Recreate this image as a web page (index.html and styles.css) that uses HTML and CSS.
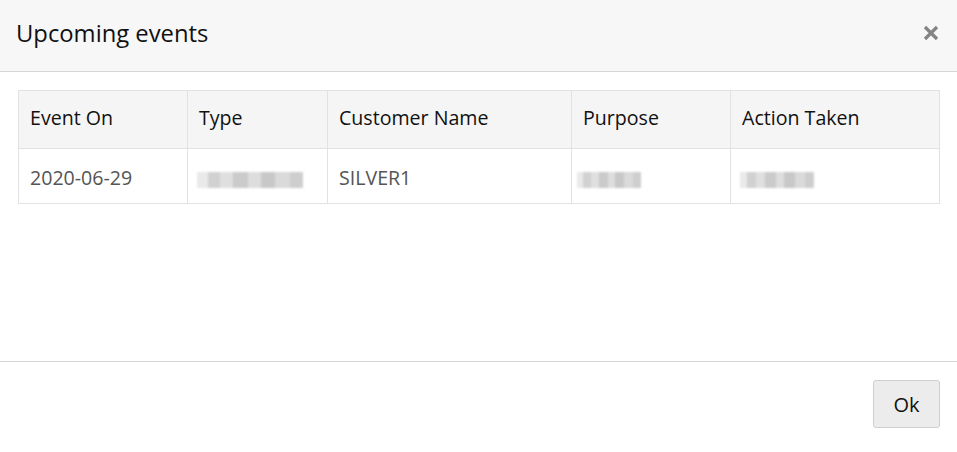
FILE: index.html
```html
<!DOCTYPE html>
<html>
<head>
<meta charset="utf-8">
<link rel="stylesheet" href="styles.css">
</head>
<body>
<div class="modal">
  <div class="modal-header">
    <h4 class="title">Upcoming events</h4>
    <button class="close" aria-label="Close">
      <svg width="16" height="16" viewBox="0 0 16 16"><path d="M2 2 L14 14 M14 2 L2 14" stroke="#848484" stroke-width="3.2" stroke-linecap="butt"/></svg>
    </button>
  </div>
  <div class="modal-body">
    <table class="events">
      <thead>
        <tr>
          <th class="c1">Event On</th>
          <th class="c2">Type</th>
          <th class="c3">Customer Name</th>
          <th class="c4">Purpose</th>
          <th class="c5">Action Taken</th>
        </tr>
      </thead>
      <tbody>
        <tr>
          <td>2020-06-29</td>
          <td><span class="blur b-type"></span></td>
          <td>SILVER1</td>
          <td><span class="blur b-purpose"></span></td>
          <td><span class="blur b-action"></span></td>
        </tr>
      </tbody>
    </table>
  </div>
  <div class="modal-footer">
    <button class="btn">Ok</button>
  </div>
</div>
</body>
</html>
```
FILE: styles.css
```css
html, body {
  margin: 0;
  padding: 0;
  background: #ffffff;
}
body {
  font-family: "Open Sans", "Noto Sans", sans-serif;
  color: #222;
}
.modal {
  width: 957px;
  height: 452px;
  display: flex;
  flex-direction: column;
}
.modal-header {
  height: 72px;
  background: #f7f7f7;
  border-bottom: 1px solid #d6d6d6;
  display: flex;
  align-items: center;
  justify-content: space-between;
  padding: 0 18px 0 16px;
  box-sizing: border-box;
}
.title {
  margin: 0;
  font-weight: 400;
  font-size: 23.8px;
  color: #111;
  padding-bottom: 6px;
}
.close {
  background: none;
  border: 0;
  padding: 0;
  width: 16px;
  height: 16px;
  margin-bottom: 6px;
  display: flex;
}
.modal-body {
  flex: 1;
  padding: 18px 17px 0 18px;
  border-bottom: 1px solid #d6d6d6;
}
.events {
  width: 922px;
  border-collapse: collapse;
  font-size: 19.6px;
}
.events th, .events td {
  border: 1px solid #e2e2e2;
  text-align: left;
  padding: 0 11px;
}
.events th {
  background: #f5f5f5;
  font-weight: 400;
  color: #111;
  height: 52px;
  padding-bottom: 5px;
}
.events td {
  color: #555;
  height: 51px;
  padding-top: 3px;
}
.c1 { width: 146px; }
.c2 { width: 117px; }
.c3 { width: 221px; }
.c4 { width: 136px; }
.blur {
  display: inline-block;
  height: 16px;
  vertical-align: middle;
  background:
    linear-gradient(90deg, #e6e6e6 0 10%, #c9c9c9 10% 22%, #dadada 22% 34%, #c2c2c2 34% 48%, #d8d8d8 48% 60%, #bfbfbf 60% 74%, #d4d4d4 74% 88%, #c6c6c6 88% 100%);
  filter: blur(1px);
  opacity: 0.85;
}
.b-type { width: 106px; margin-left: -2px; }
.b-purpose { width: 64px; margin-left: -6px; }
.b-action { width: 74px; margin-left: -2px; }
.modal-footer {
  height: 90px;
  display: flex;
  justify-content: flex-end;
  align-items: flex-start;
  padding: 18px 17px 0 0;
  box-sizing: border-box;
}
.btn {
  width: 67px;
  height: 48px;
  background: #ececec;
  border: 1px solid #cfcfcf;
  border-radius: 3px;
  font-family: "Open Sans", "Noto Sans", sans-serif;
  font-size: 20px;
  color: #111;
  padding: 0;
}
```
